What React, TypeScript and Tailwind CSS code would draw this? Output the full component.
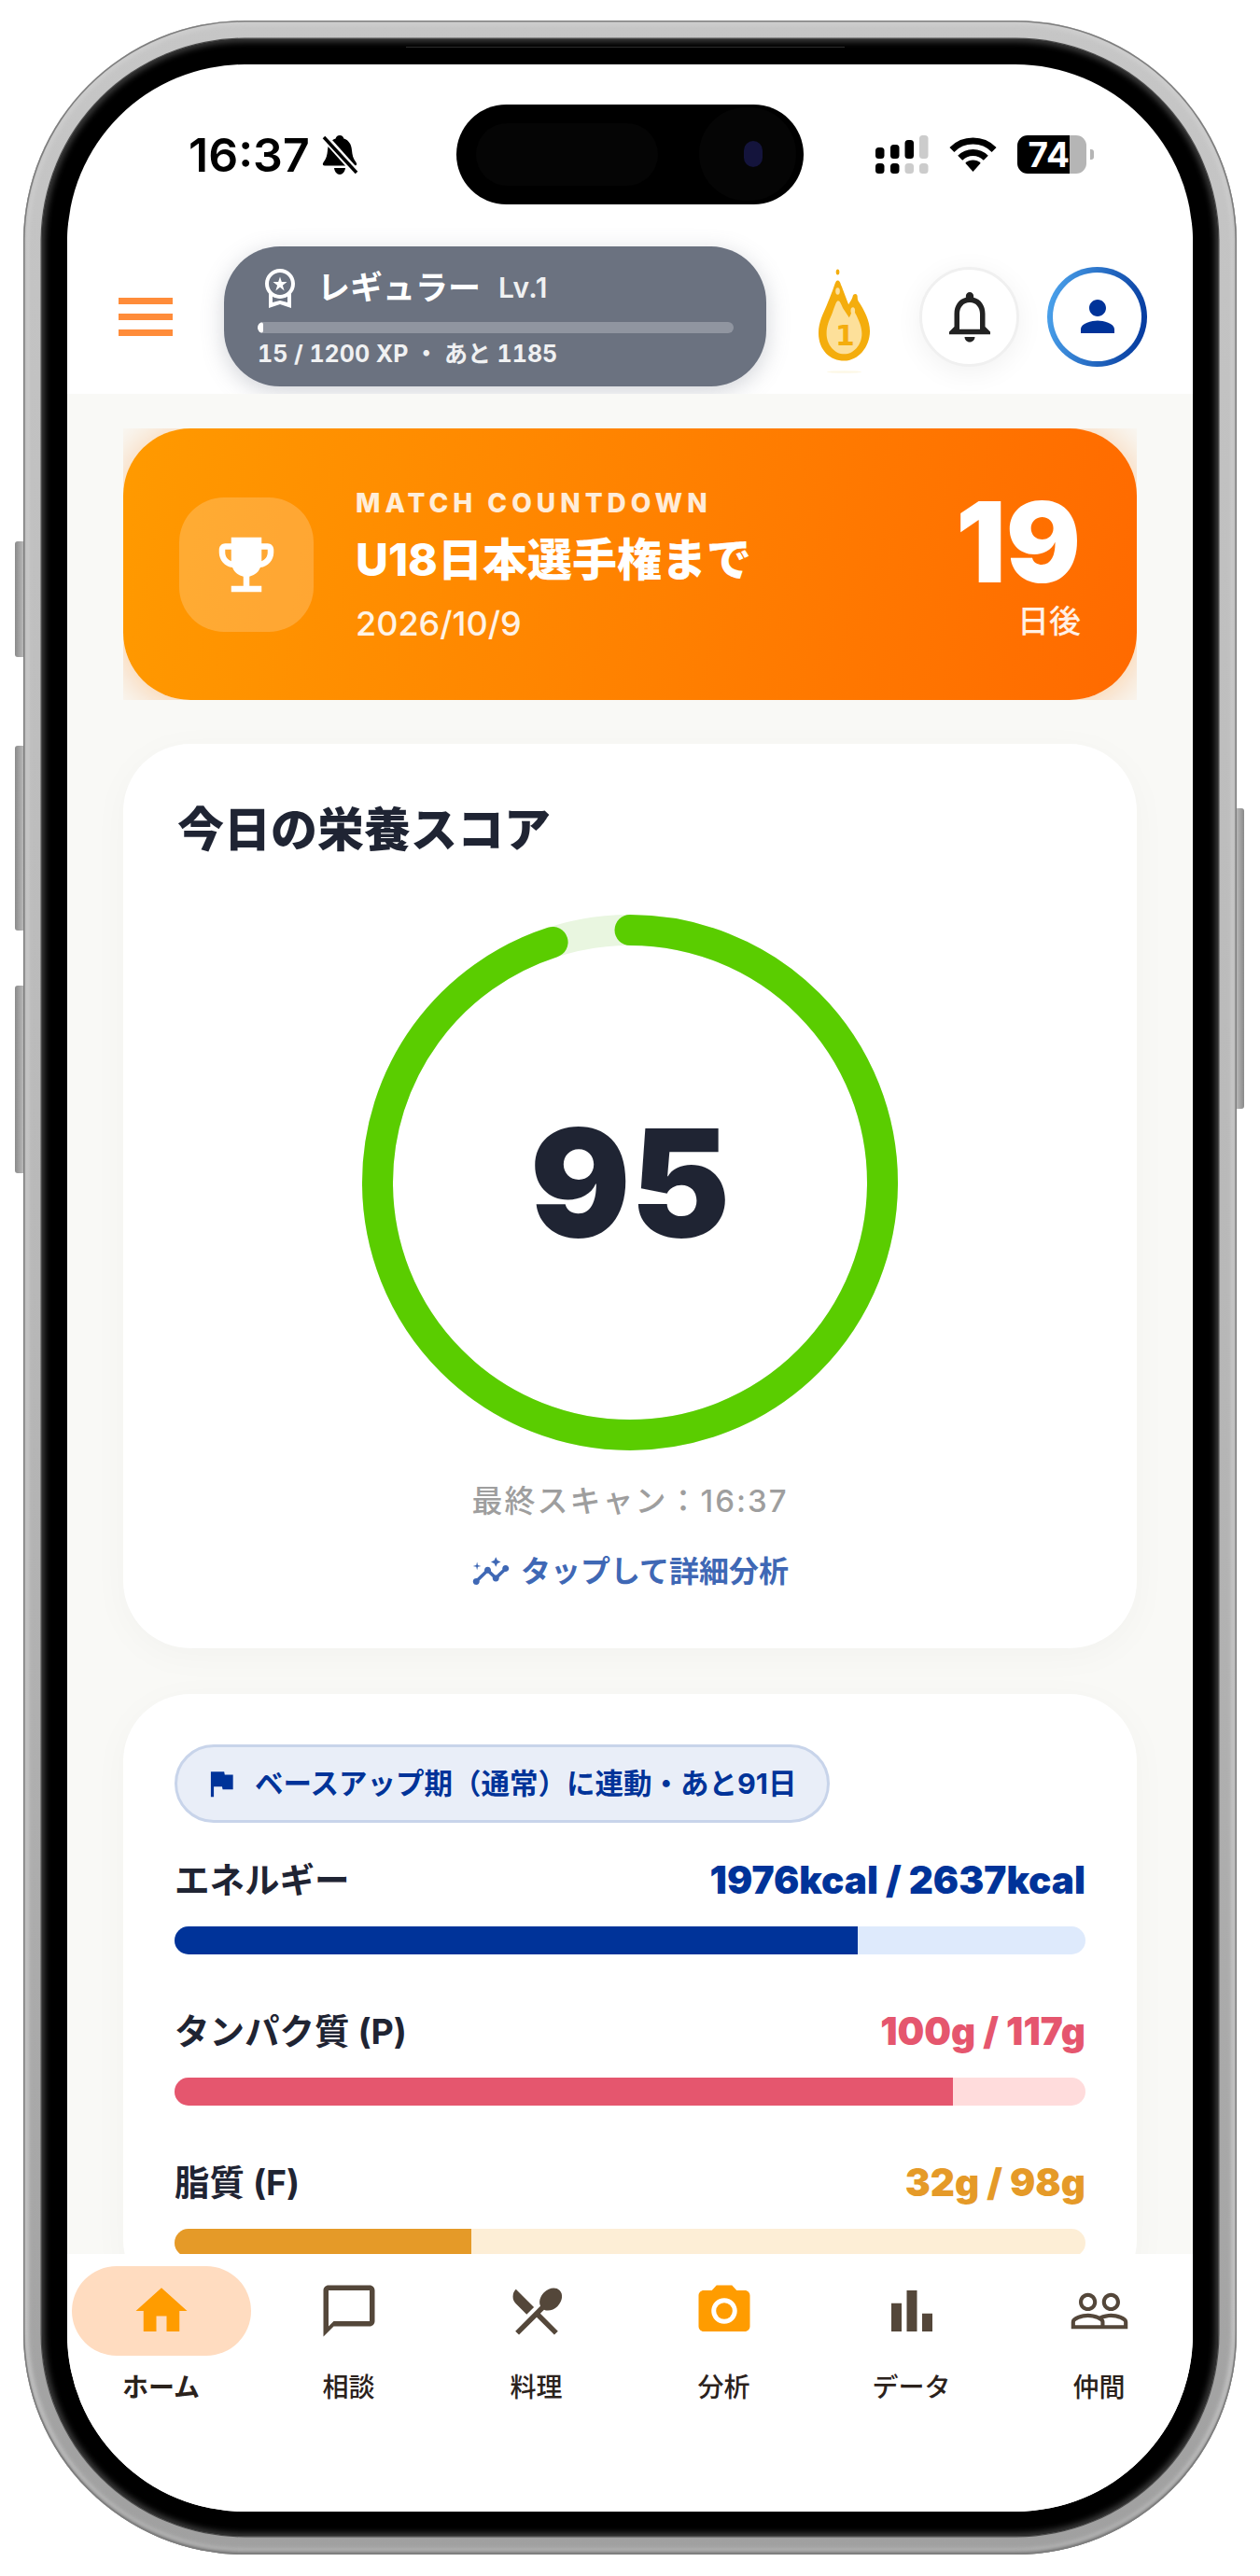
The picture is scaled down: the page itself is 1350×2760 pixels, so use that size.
import {
  MdChatBubbleOutline,
  MdEmojiEvents,
  MdFlag,
  MdHome,
  MdInsights,
  MdNotificationsNone,
  MdOutlineWorkspacePremium,
  MdPeopleOutline,
  MdPerson,
  MdPhotoCamera,
  MdRestaurantMenu,
} from "react-icons/md";
import type { ReactNode } from "react";

const BarChartIcon = ({ size, color }: { size: number; color: string }) => (
  <svg width={size} height={size} viewBox="0 0 24 24" fill={color}>
    <path d="M4 9h4v11H4zm12 4h4v7h-4zm-6-9h4v16h-4z" />
  </svg>
);

const tabs: { label: string; active?: boolean; icon: ReactNode }[] = [
  { label: "ホーム", active: true, icon: <MdHome size={66} color="#ff9c00" /> },
  { label: "相談", icon: <MdChatBubbleOutline size={66} color="#54473a" /> },
  { label: "料理", icon: <MdRestaurantMenu size={66} color="#54473a" /> },
  { label: "分析", icon: <MdPhotoCamera size={66} color="#ff9c00" /> },
  { label: "データ", icon: <BarChartIcon size={66} color="#54473a" /> },
  { label: "仲間", icon: <MdPeopleOutline size={66} color="#54473a" /> },
];

const macros = [
  { name: "エネルギー", value: "1976kcal / 2637kcal", pct: 75, text: "text-[#003399]", fill: "bg-[#003399]", track: "bg-[#deeafc]" },
  { name: "タンパク質 (P)", value: "100g / 117g", pct: 85.5, text: "text-[#e5566e]", fill: "bg-[#e5566e]", track: "bg-[#ffdcdc]" },
  { name: "脂質 (F)", value: "32g / 98g", pct: 32.6, text: "text-[#e59a28]", fill: "bg-[#e59a28]", track: "bg-[#fdeed6]" },
];

const SilentBell = () => (
  <svg width="40" height="42" viewBox="0 0 40 42" className="shrink-0">
    <path d="M20 0c2.5 0 4 1.6 4.4 3.6C30 5.4 32.5 10 33 16c.4 5 1.4 9 4.5 13 1.3 1.800.6 3.500-1.500 3.500H4c-2.100 0-2.800-1.700-1.500-3.500C5.600 25 6.600 21 7 16c.5-6 3-10.600 8.600-12.400C16 1.600 17.500 0 20 0z" fill="#000" />
    <path d="M14 35h12c-.5 4-3 7-6 7s-5.500-3-6-7z" fill="#000" />
    <line x1="3" y1="1" x2="38" y2="40" stroke="#fff" strokeWidth="8" />
    <line x1="3" y1="2" x2="38" y2="40" stroke="#000" strokeWidth="3.500" />
  </svg>
);

const CellSignal = () => (
  <svg width="57" height="41" viewBox="0 0 57 41">
    <rect x="0" y="13" width="9.500" height="12" rx="3.500" fill="#000" />
    <rect x="16" y="10" width="9.500" height="15" rx="3.500" fill="#000" />
    <rect x="31.500" y="5" width="9.500" height="20" rx="3.500" fill="#000" />
    <rect x="47" y="0" width="9.500" height="25" rx="3.500" fill="#ccc" />
    <rect x="0" y="30" width="9.500" height="11" rx="3.500" fill="#000" />
    <rect x="16" y="30" width="9.500" height="11" rx="3.500" fill="#000" />
    <rect x="31.500" y="30" width="9.500" height="11" rx="3.500" fill="#ccc" />
    <rect x="47" y="30" width="9.500" height="11" rx="3.500" fill="#ccc" />
  </svg>
);

const Wifi = () => (
  <svg width="51" height="37" viewBox="0 0 51 37" fill="none">
    <path d="M2.900 13.400a32 32 0 0 1 45.200 0" stroke="#000" strokeWidth="7" />
    <path d="M11.700 22.200a19.500 19.500 0 0 1 27.600 0" stroke="#000" strokeWidth="7" />
    <path d="M25.500 37L17.300 27.800a12 12 0 0 1 16.400 0z" fill="#000" />
  </svg>
);

const Flame = () => (
  <svg width="63" height="113" viewBox="40 80 190 340" className="shrink-0">
    <ellipse cx="114" cy="93" rx="5.500" ry="9" fill="#f4ad0d" />
    <path d="M114 120c6 0 9 8 13 20l22 58c4-8 10-14 13-24 1-8 4-10 9-10s7 4 7 12c0 6 2 10 6 16 16 26 34 58 34 92 0 52-38 96-83 96S52 346 52 290c0-34 14-60 26-88 10-24 20-50 26-68 3-9 5-14 10-14z" fill="#f4ad0d" />
    <path d="M115 186c6 0 10 10 16 24l20 30c4-6 6-16 12-22 6 2 8 8 12 16 8 18 17 36 17 58 0 36-26 66-57 66s-57-30-57-66c0-24 8-42 16-60 8-18 14-46 21-46z" fill="#fde09a" />
    <ellipse cx="114" cy="155" rx="7" ry="11" fill="#fde09a" />
    <ellipse cx="163" cy="218" rx="7" ry="11" fill="#fde09a" />
    <ellipse cx="135" cy="416" rx="56" ry="4" fill="#fdf8e6" />
    <text x="138" y="330" textAnchor="middle" fontSize="90" fontWeight="700" fontFamily="DejaVu Sans" fill="#f4ad0d">1</text>
  </svg>
);

const ScoreRing = () => {
  const r = 270.5;
  const c = 2 * Math.PI * r;
  return (
    <svg width="576" height="576" viewBox="0 0 576 576" className="-rotate-90">
      <circle cx="288" cy="288" r={r} fill="none" stroke="#e9f6e0" strokeWidth="33" />
      <circle cx="288" cy="288" r={r} fill="none" stroke="#5acd00" strokeWidth="33" strokeLinecap="round" strokeDasharray={`${c * 0.95} ${c}`} />
    </svg>
  );
};

export default function App() {
  return (
    <div className="relative w-[1350px] h-[2760px] bg-white pl-[25px] pt-[22px] overflow-hidden font-['Inter','Noto_Sans_CJK_JP',sans-serif]">
      {/* side buttons */}
      <div className="absolute left-[16px] top-[580px] w-[10px] h-[124px] rounded-l-[3px] bg-[linear-gradient(90deg,#8a8a8a,#bdbdbd)]" />
      <div className="absolute left-[16px] top-[799px] w-[10px] h-[198px] rounded-l-[3px] bg-[linear-gradient(90deg,#8a8a8a,#bdbdbd)]" />
      <div className="absolute left-[16px] top-[1056px] w-[10px] h-[201px] rounded-l-[3px] bg-[linear-gradient(90deg,#8a8a8a,#bdbdbd)]" />
      <div className="absolute left-[1324px] top-[866px] w-[9px] h-[322px] rounded-r-[3px] bg-[linear-gradient(270deg,#8a8a8a,#bdbdbd)]" />

      {/* phone frame */}
      <div className="relative w-[1300px] h-[2715px] rounded-[237px] p-[20px] bg-[linear-gradient(180deg,#c6c6c6,#b8b8b8_50%,#a0a0a0)] shadow-[inset_0_0_0_1.500px_#7e7e7e,inset_0_-3px_4px_#6e6e6e,inset_0_0_5px_5px_#cfcfcf]">
        <div className="relative w-[1260px] h-[2675px] rounded-[217px] bg-black p-[27px] shadow-[0_0_0_1.500px_#4a4a4a,inset_0_0_6px_3px_#3c3c3c]">
          <div className="absolute left-[390px] top-[8px] w-[470px] h-[1px] bg-[#2c2c2c]" />
          <div className="flex flex-col w-[1206px] h-[2622px] rounded-[190px] overflow-hidden bg-white">
            {/* status bar */}
            <div className="flex items-center h-[170px] shrink-0 pl-[130px] pt-[43px] pb-[20px]">
              <div className="flex items-center gap-[12px] w-[287px]">
                <span className="text-[50px] leading-[50px] font-semibold text-black">16:37</span>
                <SilentBell />
              </div>
              <div className="relative w-[372px] h-[107px] rounded-[54px] bg-black shrink-0">
                <div className="absolute left-[21px] top-[20px] w-[195px] h-[67px] rounded-[34px] bg-[#050505]" />
                <div className="absolute right-[8px] top-[3px] w-[104px] h-[100px] rounded-full bg-[#050505]" />
                <div className="absolute right-[44px] top-[39px] w-[20px] h-[28px] rounded-full bg-[#14143c]" />
              </div>
              <div className="flex items-center ml-[77px] gap-[22px]">
                <CellSignal />
                <Wifi />
                <div className="flex items-center gap-[4px]">
                  <div className="flex w-[74px] h-[41px]">
                    <div className="flex items-center justify-end w-[56px] rounded-l-[11px] bg-black text-white text-[37px] font-bold leading-[41px]">74</div>
                    <div className="w-[18px] rounded-r-[11px] bg-[#b5b5b5]" />
                  </div>
                  <div className="w-[4px] h-[11px] rounded-r-[3px] bg-[#b5b5b5]" />
                </div>
              </div>
            </div>

            {/* app header */}
            <div className="flex items-center h-[183px] shrink-0 pl-[55px] pt-[25px] pb-[8px] bg-white">
              <div className="flex flex-col gap-[10px] w-[58px]">
                <div className="h-[7px] bg-[#ff8c3a]" />
                <div className="h-[7px] bg-[#ff8c3a]" />
                <div className="h-[7px] bg-[#ff8c3a]" />
              </div>
              <div className="flex flex-col w-[581px] h-[150px] ml-[55px] pt-[24px] pl-[36px] pr-[35px] rounded-[60px] bg-[#6b7280] shadow-[0_6px_24px_rgba(107,114,128,0.3)]">
                <div className="flex items-center h-[40px]">
                  <MdOutlineWorkspacePremium size={48} color="#fff" className="shrink-0" />
                  <span className="ml-[16px] text-[35px] leading-[40px] font-bold text-white">レギュラー</span>
                  <span className="ml-[19px] text-[30px] leading-[40px] font-semibold tracking-[0.5px] text-white/90">Lv.1</span>
                </div>
                <div className="h-[12px] mt-[17px] rounded-full overflow-hidden bg-white/25">
                  <div className="h-full rounded-full bg-white w-[1.250%]" />
                </div>
                <div className="mt-[9px] text-[25px] leading-[26px] font-bold tabular-nums text-white/90">15 / 1200 XP ・ あと 1185</div>
              </div>
              <div className="ml-[52px] flex items-center h-[113px] mt-[8px]">
                <Flame />
              </div>
              <div className="flex items-center justify-center w-[107px] h-[107px] ml-[49px] rounded-full bg-white border-[3px] border-[#f0f0f0] shadow-[0_6px_30px_rgba(0,0,0,0.06)]">
                <MdNotificationsNone size={66} color="#222" />
              </div>
              <div className="w-[107px] h-[107px] ml-[30px] rounded-full p-[6px] bg-[linear-gradient(100deg,#4fa8f0,#003399)]">
                <div className="flex items-center justify-center w-full h-full rounded-full bg-white">
                  <MdPerson size={54} color="#003399" />
                </div>
              </div>
            </div>

            {/* scroll area */}
            <div className="flex-1 min-h-0 overflow-hidden bg-[#f9f9f6] px-[60px] pt-[37px]">
              <div className="h-[291px] overflow-hidden">
                <div className="flex items-center h-[291px] pl-[60px] pr-[60px] rounded-[72px] bg-[linear-gradient(100deg,#ff9a00,#ff6a00)] shadow-[0_4px_48px_rgba(255,122,0,0.4)]">
                  <div className="flex items-center justify-center w-[144px] h-[144px] shrink-0 rounded-[48px] bg-white/20">
                    <MdEmojiEvents size={78} color="#fff" />
                  </div>
                  <div className="flex-1 ml-[45px]">
                    <div className="text-[28px] leading-[34px] font-extrabold tracking-[5px] text-white/85">MATCH COUNTDOWN</div>
                    <div className="mt-[14px] text-[48px] leading-[60px] font-extrabold text-white">U18日本選手権まで</div>
                    <div className="mt-[18px] text-[36px] leading-[40px] font-medium text-white/90">2026/10/9</div>
                  </div>
                  <div className="flex flex-col items-end">
                    <div className="text-[119px] leading-[116px] font-black text-white">19</div>
                    <div className="mt-[7px] text-[34px] leading-[40px] font-medium text-white/90">日後</div>
                  </div>
                </div>
              </div>

              <div className="mt-[47px] h-[969px] pt-[62px] rounded-[72px] bg-white shadow-[0_8px_40px_rgba(0,0,0,0.03)]">
                <div className="pl-[58px] text-[50px] leading-[60px] font-extrabold text-[#1f2433]">今日の栄養スコア</div>
                <div className="relative w-[576px] h-[576px] mx-auto mt-[60px]">
                  <ScoreRing />
                  <div className="absolute inset-0 flex items-center justify-center text-[160px] font-black text-[#1f2433]">95</div>
                </div>
                <div className="mt-[31px] text-center text-[33px] leading-[44px] font-medium tracking-[2px] text-[#9e9e9e]">最終スキャン：16:37</div>
                <div className="flex items-center justify-center gap-[11px] mt-[34px] h-[40px] text-[32px] font-bold text-[#3f68b5]">
                  <MdInsights size={42} />
                  <span>タップして詳細分析</span>
                </div>
              </div>

              <div className="mt-[49px] pt-[54px] px-[55px] pb-[54px] rounded-[72px] bg-white shadow-[0_8px_40px_rgba(0,0,0,0.03)]">
                <div className="flex items-center gap-[17px] w-[702px] h-[84px] pl-[28px] rounded-full border-[3px] border-[#c8d4ea] bg-[#e9eef8] text-[30.500px] font-bold text-[#003399]">
                  <MdFlag size={38} />
                  <span>ベースアップ期（通常）に連動・あと91日</span>
                </div>
                <div className="flex flex-col gap-[60px] mt-[39px]">
                  {macros.map((m) => (
                    <div key={m.name}>
                      <div className="flex items-center justify-between h-[46px]">
                        <span className="text-[37.500px] font-bold text-[#1f2433]">{m.name}</span>
                        <span className={`text-[40.500px] font-black ${m.text}`}>{m.value}</span>
                      </div>
                      <div className={`h-[30px] mt-[26px] rounded-full overflow-hidden ${m.track}`}>
                        <div className={`h-full ${m.fill}`} style={{ width: `${m.pct}%` }} />
                      </div>
                    </div>
                  ))}
                </div>
              </div>
            </div>

            {/* bottom nav */}
            <div className="grid grid-cols-6 h-[276px] shrink-0 pt-[13px] bg-white">
              {tabs.map((t) => (
                <div key={t.label} className="flex flex-col items-center">
                  <div className={`flex items-center justify-center w-[192px] h-[96px] rounded-[48px] ${t.active ? "bg-[#ffdcc0]" : ""}`}>
                    {t.icon}
                  </div>
                  <div className={`mt-[16px] text-[28px] leading-[36px] text-[#2b221c] ${t.active ? "font-bold" : "font-medium"}`}>{t.label}</div>
                </div>
              ))}
            </div>
          </div>
        </div>
      </div>
    </div>
  );
}
